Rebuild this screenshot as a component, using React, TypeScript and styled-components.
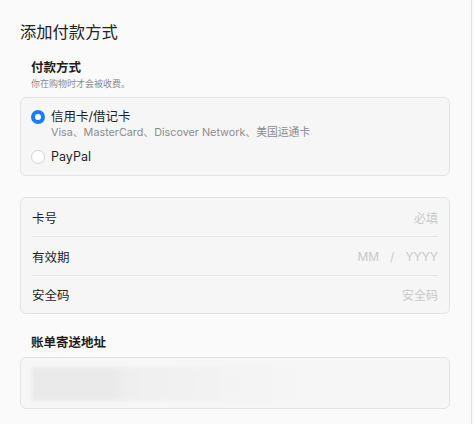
import styled, { createGlobalStyle } from 'styled-components'

const GlobalStyle = createGlobalStyle`
  html, body {
    margin: 0;
    padding: 0;
    background: #fafafa;
  }
  body {
    font-family: Inter, "Noto Sans CJK SC", sans-serif;
    color: #1f1f1f;
    -webkit-font-smoothing: antialiased;
  }
`

const Page = styled.div`
  box-sizing: border-box;
  width: 472px;
  height: 424px;
  padding: 20px 21px 0 20px;
  border-right: 1px solid #e4e4e4;
  background: #fafafa;
  overflow: hidden;
`

const Title = styled.h1`
  margin: 0;
  font-size: 16.3px;
  line-height: 24px;
  font-weight: 400;
  color: #222;
`

const SectionTitle = styled.h2<{ $top: number }>`
  margin: ${p => p.$top}px 0 0 11px;
  font-size: 12.5px;
  line-height: 18px;
  font-weight: 600;
  color: #1d1d1d;
`

const SectionHint = styled.p`
  margin: 0 0 0 11px;
  font-size: 9px;
  line-height: 14px;
  color: #8a8a8a;
`

const Card = styled.div<{ $top: number }>`
  box-sizing: border-box;
  margin-top: ${p => p.$top}px;
  border: 1px solid #e3e3e3;
  border-radius: 6px;
  background: #f6f6f6;
`

const Options = styled.div`
  display: flex;
  flex-direction: column;
  gap: 8px;
  padding: 10px 10px 9px;
`

const Option = styled.label`
  display: grid;
  grid-template-columns: 14px 1fr;
  column-gap: 6px;
  align-items: start;
`

const Radio = styled.span<{ $checked?: boolean }>`
  box-sizing: border-box;
  width: 14px;
  height: 14px;
  margin-top: 2px;
  border-radius: 50%;
  background: #fff;
  border: ${p => (p.$checked ? '4.5px solid #1a7cf6' : '1px solid #d4d4d4')};
`

const OptionText = styled.div`
  display: flex;
  flex-direction: column;
`

const OptionLabel = styled.span`
  font-size: 12.5px;
  line-height: 18px;
  color: #1f1f1f;
`

const OptionNote = styled.span`
  font-size: 10.8px;
  line-height: 14px;
  color: #8c8c8c;
`

const Field = styled.div`
  display: flex;
  align-items: center;
  justify-content: space-between;
  height: 38px;
  margin: 0 11px;
  & + & {
    border-top: 1px solid #e6e6e6;
  }
  &:last-child {
    height: 37px;
  }
`

const FieldLabel = styled.span`
  font-size: 12.5px;
  color: #1f1f1f;
`

const Placeholder = styled.span`
  display: flex;
  gap: 11px;
  font-size: 12px;
  color: #c8c8c8;
`

const AddressBox = styled.div`
  padding: 9px 11px 7px;
`

const Blurred = styled.div`
  width: 260px;
  height: 34px;
  background: linear-gradient(90deg, #eaeaea 0%, #eaeaea 30%, #efefef 38%, #f2f2f2 70%, #f5f5f5 100%);
  filter: blur(1.5px);
`

const App = () => {
  return (
    <>
      <GlobalStyle />
      <Page>
        <Title>添加付款方式</Title>
        <SectionTitle $top={15}>付款方式</SectionTitle>
        <SectionHint>你在购物时才会被收费。</SectionHint>
        <Card $top={6}>
          <Options>
            <Option>
              <Radio $checked />
              <OptionText>
                <OptionLabel>信用卡/借记卡</OptionLabel>
                <OptionNote>Visa、MasterCard、Discover Network、美国运通卡</OptionNote>
              </OptionText>
            </Option>
            <Option>
              <Radio />
              <OptionText>
                <OptionLabel>PayPal</OptionLabel>
              </OptionText>
            </Option>
          </Options>
        </Card>
        <Card $top={21}>
          <Field>
            <FieldLabel>卡号</FieldLabel>
            <Placeholder>必填</Placeholder>
          </Field>
          <Field>
            <FieldLabel>有效期</FieldLabel>
            <Placeholder>
              <span>MM</span>
              <span>/</span>
              <span>YYYY</span>
            </Placeholder>
          </Field>
          <Field>
            <FieldLabel>安全码</FieldLabel>
            <Placeholder>安全码</Placeholder>
          </Field>
        </Card>
        <SectionTitle $top={20}>账单寄送地址</SectionTitle>
        <Card $top={5}>
          <AddressBox>
            <Blurred />
          </AddressBox>
        </Card>
      </Page>
    </>
  )
}

export default App
